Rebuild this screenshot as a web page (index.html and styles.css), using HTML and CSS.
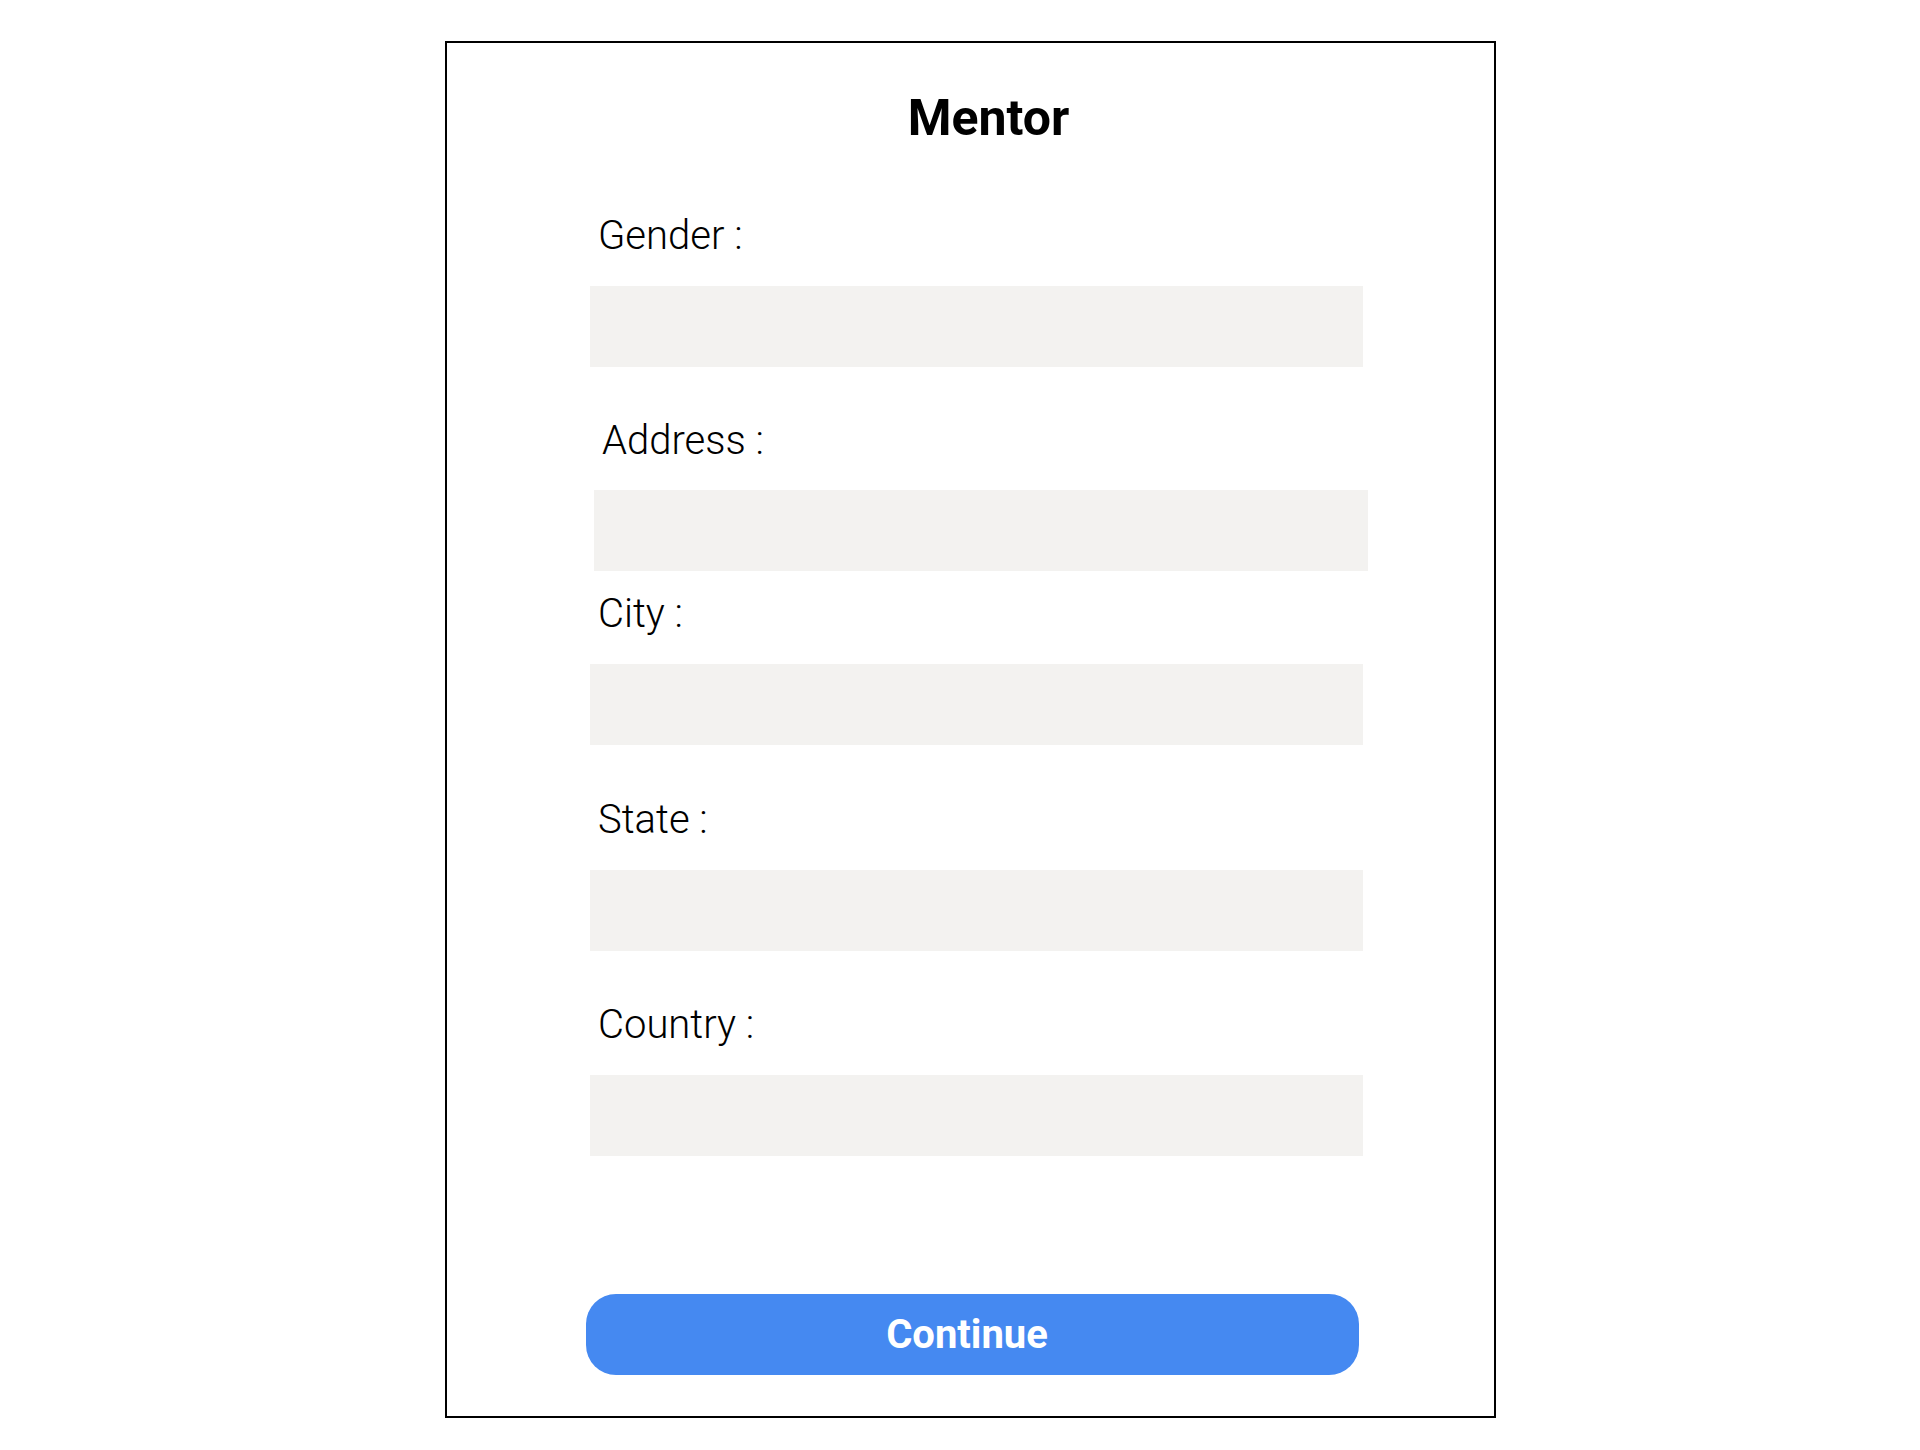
FILE: index.html
```html
<!DOCTYPE html>
<html lang="en">
<head>
<meta charset="utf-8">
<title>Mentor</title>
<link rel="stylesheet" href="styles.css">
</head>
<body>
<div class="card">
  <h1 class="title">Mentor</h1>
  <form class="form">
    <div class="field field-gender">
      <label class="label">Gender :</label>
      <div class="input"></div>
    </div>
    <div class="field field-address">
      <label class="label">Address :</label>
      <div class="input"></div>
    </div>
    <div class="field field-city">
      <label class="label">City :</label>
      <div class="input"></div>
    </div>
    <div class="field field-state">
      <label class="label">State :</label>
      <div class="input"></div>
    </div>
    <div class="field field-country">
      <label class="label">Country :</label>
      <div class="input"></div>
    </div>
    <button type="button" class="button">Continue</button>
  </form>
</div>
</body>
</html>
```

FILE: styles.css
```css
html, body {
  margin: 0;
  padding: 0;
  background: #ffffff;
}

body {
  font-family: Roboto, "Liberation Sans", Arial, sans-serif;
  color: #000;
}

.card {
  box-sizing: border-box;
  width: 1051px;
  height: 1377px;
  margin: 41px 0 0 445px;
  border: 2px solid #000;
  display: flex;
  flex-direction: column;
}

.title {
  margin: 46px 0 0 36px;
  font-size: 50px;
  line-height: 58px;
  font-weight: 700;
  text-align: center;
}

.form {
  margin-left: 143px;
  width: 773px;
  display: flex;
  flex-direction: column;
  align-items: flex-start;
}

.field {
  display: flex;
  flex-direction: column;
  width: 773px;
}

.field-gender { margin-top: 66px; }
.field-address { margin-top: 50px; margin-left: 4px; width: 774px; }
.field-address .label { padding-top: 3px; }
.field-address .input { margin-top: 28px; }
.field-city { margin-top: 20px; }
.field-state { margin-top: 52px; }
.field-country { margin-top: 51px; }

.label {
  display: block;
  padding: 2px 0 0 8px;
  font-size: 40px;
  line-height: 42px;
  font-weight: 300;
}

.input {
  margin-top: 29px;
  height: 81px;
  background: #f3f2f0;
}

.button {
  margin: 138px 0 0 -4px;
  width: 773px;
  height: 81px;
  border: none;
  border-radius: 30px;
  background: #4589f1;
  color: #fff;
  font-family: Roboto, "Liberation Sans", Arial, sans-serif;
  font-size: 40px;
  font-weight: 700;
  padding: 0 11px 0 0;
  cursor: pointer;
}
```
